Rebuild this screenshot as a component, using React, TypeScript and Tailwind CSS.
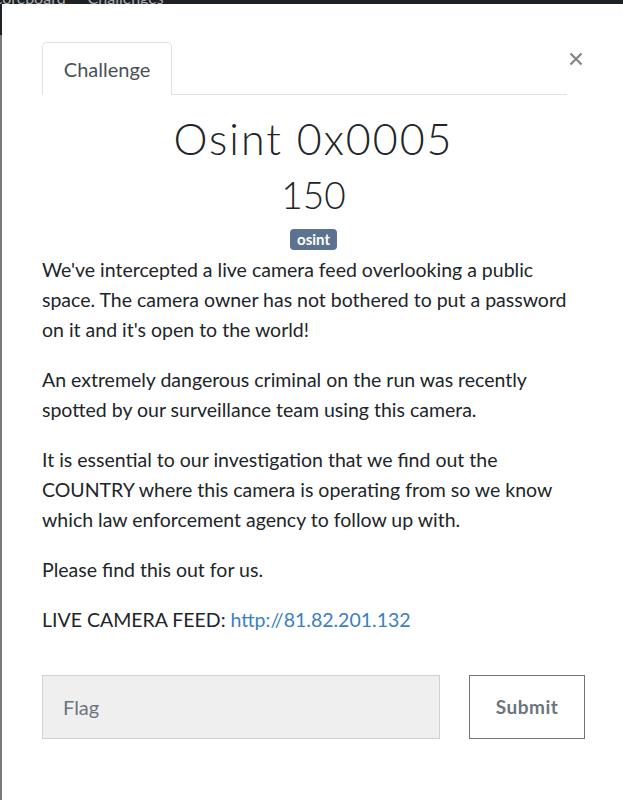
import React from "react";

export default function App() {
  const lato = { fontFamily: "Lato, 'Open Sans', sans-serif" } as React.CSSProperties;
  return (
    <div className="w-[623px] h-[800px] bg-white overflow-hidden flex flex-col" style={lato}>
      <div className="h-[4px] bg-[#1d2024] overflow-hidden relative shrink-0">
        <div className="absolute left-[-14px] top-[-14px] text-[16px] text-[#a9adb2] whitespace-nowrap flex gap-[22px]">
          <span>Scoreboard</span>
          <span>Challenges</span>
        </div>
      </div>
      <div className="flex flex-1">
        <div className="w-[2px] flex flex-col shrink-0">
          <div className="h-[31px] bg-[#1d2024]" />
          <div className="flex-1 bg-[#7a7a7a]" />
        </div>
        <div className="w-[543px] ml-[40px] bg-white pt-[38px]">
          <div className="flex items-start">
            <div className="w-[525px] flex border-b border-[#dee2e6]">
              <div className="w-[130px] h-[53px] flex items-center justify-center border border-b-0 border-[#dee2e6] rounded-t-[5px] bg-white -mb-px text-[20px] text-[#495057]">
                Challenge
              </div>
            </div>
            <div className="flex-1 flex justify-end pt-[10px]">
              <svg width="14" height="14" viewBox="0 0 14 14" className="mr-[2px]">
                <path d="M1.5 1.5 L12.5 12.5 M12.5 1.5 L1.5 12.5" stroke="#888" strokeWidth="2.4" />
              </svg>
            </div>
          </div>

          <div className="flex flex-col items-center">
            <h1 className="mt-[19px] text-[43px] leading-[50px] font-light text-[#212529] tracking-[2px]">
              Osint 0x0005
            </h1>
            <div className="mt-[9px] text-[37px] leading-[44px] font-light text-[#212529]">150</div>
            <span className="mt-[12px] px-[7px] h-[21px] flex items-center rounded-[4px] bg-[#5b7290] text-white text-[15px] font-bold leading-none">
              osint
            </span>
          </div>

          <div className="w-[540px] text-[19.5px] leading-[30px] text-[#212529] mt-[5px]">
            <p className="mb-[20px]">
              We've intercepted a live camera feed overlooking a public space. The camera owner has not bothered to put a password on it and it's open to the world!
            </p>
            <p className="mb-[20px]">
              An extremely dangerous criminal on the run was recently spotted by our surveillance team using this camera.
            </p>
            <p className="mb-[20px]">
              It is essential to our investigation that we find out the COUNTRY where this camera is operating from so we know which law enforcement agency to follow up with.
            </p>
            <p className="mb-[20px]">Please find this out for us.</p>
            <p>
              LIVE CAMERA FEED: <a className="text-[#3a7fc1]">http://81.82.201.132</a>
            </p>
          </div>

          <div className="flex mt-[40px]">
            <div className="w-[398px] h-[64px] bg-[#efefef] border border-[#ccd1d7] flex items-center pl-[20px] text-[20px] text-[#6c757d]">
              Flag
            </div>
            <div className="ml-[29px] w-[116px] h-[64px] border border-[#6c757d] flex items-center justify-center text-[19px] font-bold text-[#6c757d] tracking-[0.5px]">
              Submit
            </div>
          </div>
        </div>
      </div>
    </div>
  );
}
